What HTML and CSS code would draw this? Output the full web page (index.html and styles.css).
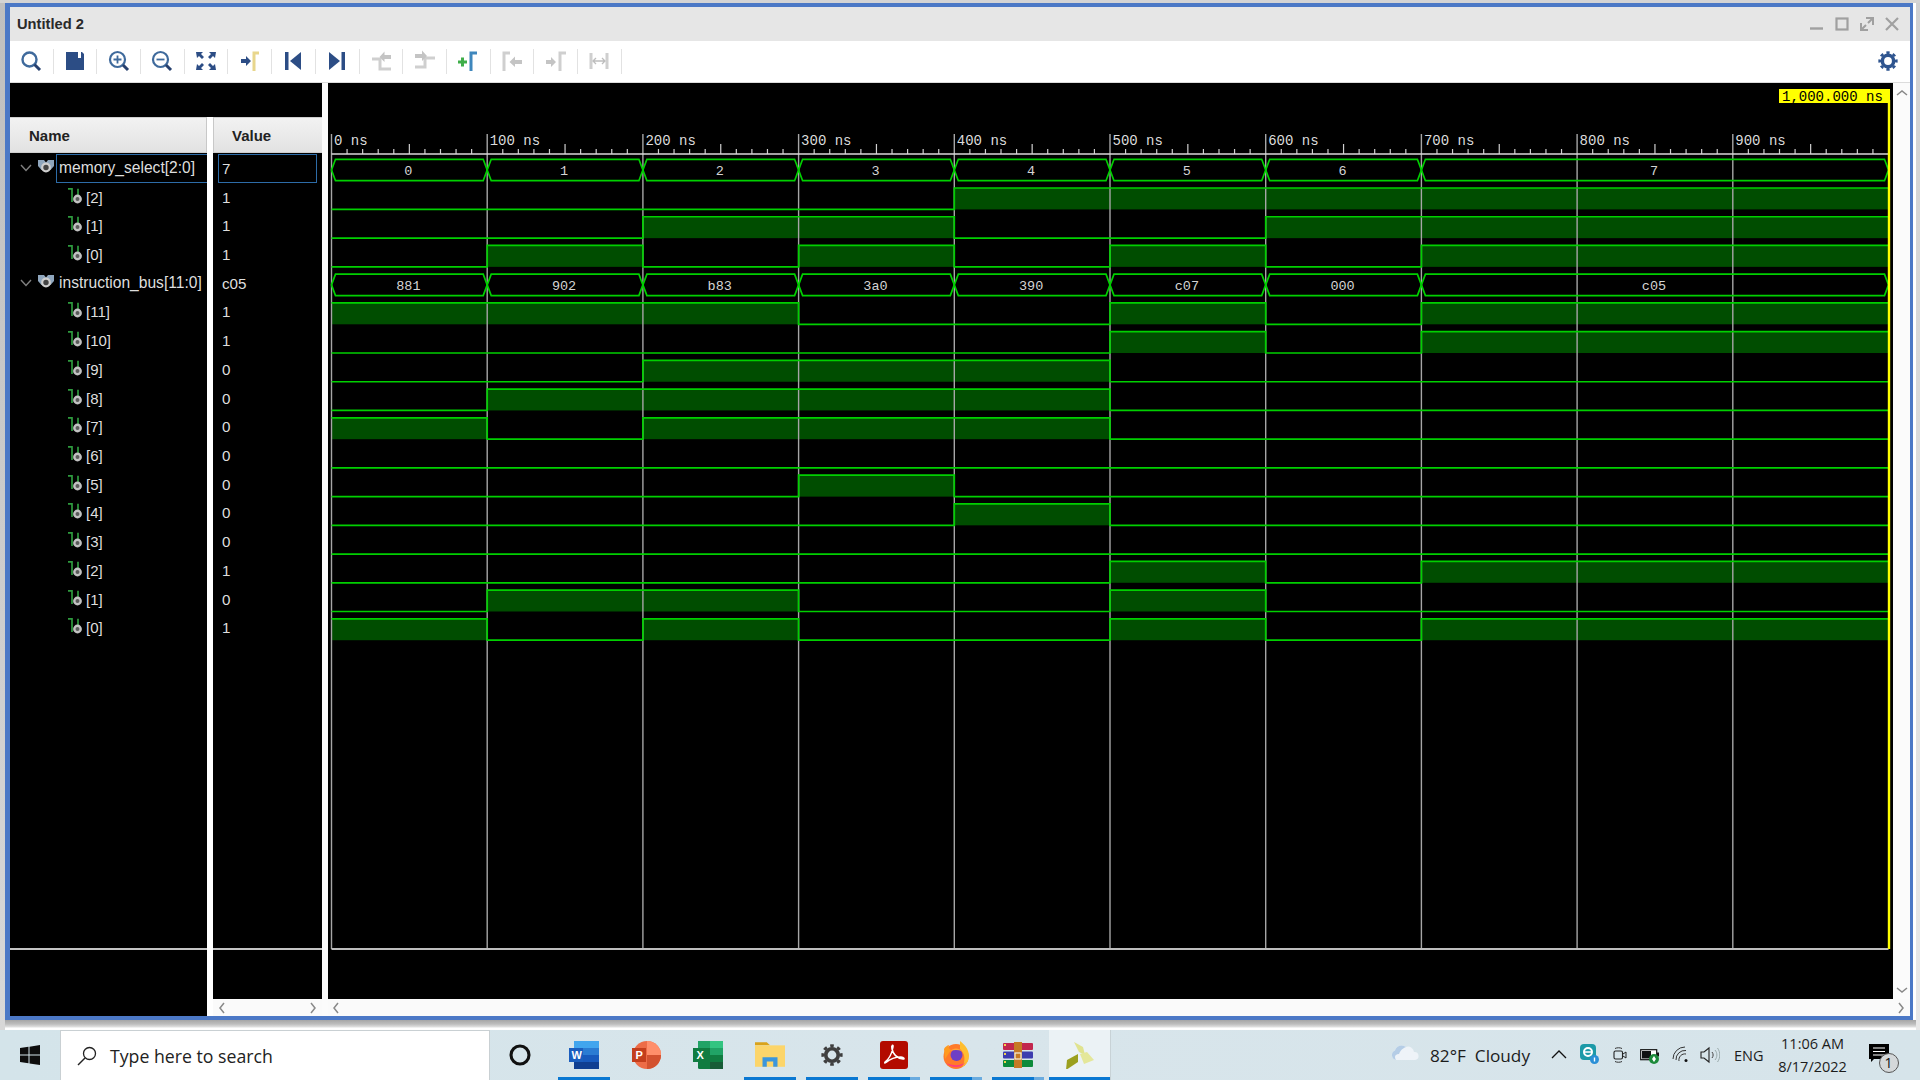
FILE: index.html
```html
<!DOCTYPE html>
<html lang="en">
<head>
<meta charset="utf-8">
<title>Untitled 2</title>
<link rel="stylesheet" href="styles.css">
</head>
<body>
<svg class="defs" width="0" height="0" aria-hidden="true">
  <defs>
    <symbol id="bit" viewBox="0 0 14 16">
      <path d="M0 .8H4V14" fill="none" stroke="#2e9a3e" stroke-width="1.700"/>
      <path d="M10 .8V7" fill="none" stroke="#2e9a3e" stroke-width="1.700"/>
      <circle cx="9.500" cy="11" r="3.200" fill="#5a5a5a" stroke="#c2c2c2" stroke-width="2.400"/>
    </symbol>
    <symbol id="group" viewBox="0 0 16 15">
      <path d="M0 1H6L8 3.500L10 1H16V7L12.500 11H3.500L0 7Z" fill="#8fa6bd"/>
      <circle cx="8" cy="8.500" r="3.800" fill="#444" stroke="#cfcfcf" stroke-width="2.200"/>
    </symbol>
    <symbol id="chev" viewBox="0 0 12 8">
      <path d="M1 1L6 6.500L11 1" fill="none" stroke="#808080" stroke-width="1.400"/>
    </symbol>
  </defs>
</svg>

<div class="window">
  <div class="frame">
    <header class="title">
      <span class="title-text">Untitled 2</span>
      <div class="winctl">
        <svg class="wc" viewBox="0 0 14 14"><path d="M0 11.500H13" stroke="#a0a0a0" stroke-width="2.400" fill="none"/></svg>
        <svg class="wc" viewBox="0 0 14 14"><rect x="1.500" y="1.500" width="11" height="11" stroke="#a0a0a0" stroke-width="2.200" fill="none"/></svg>
        <svg class="wc" viewBox="0 0 14 14"><path d="M6 1H13V8M13 1L8 6M8 13H1V6M1 13L6 8" stroke="#a0a0a0" stroke-width="2" fill="none"/></svg>
        <svg class="wc" viewBox="0 0 14 14"><path d="M1 1L13 13M13 1L1 13" stroke="#a0a0a0" stroke-width="2.200" fill="none"/></svg>
      </div>
    </header>

    <nav class="toolbar">
      <div class="tool"><svg viewBox="0 0 24 24"><circle cx="10.500" cy="10.500" r="7" fill="none" stroke="#3f6a9c" stroke-width="2.400"/><path d="M15.500 15.500L21 21" stroke="#27406e" stroke-width="3"/></svg></div>
      <div class="tool"><svg viewBox="0 0 24 24"><path d="M3 3H15V9H18V3H19L21 5V21H3Z" fill="#2c4d85"/></svg></div>
      <div class="tool"><svg viewBox="0 0 24 24"><circle cx="10.500" cy="10.500" r="7.500" fill="none" stroke="#3f6a9c" stroke-width="2.200"/><path d="M16 16L21 21" stroke="#27406e" stroke-width="3"/><path d="M6.500 10.500H14.500M10.500 6.500V14.500" stroke="#3f6a9c" stroke-width="1.800"/></svg></div>
      <div class="tool"><svg viewBox="0 0 24 24"><circle cx="10.500" cy="10.500" r="7.500" fill="none" stroke="#3f6a9c" stroke-width="2.200"/><path d="M16 16L21 21" stroke="#27406e" stroke-width="3"/><path d="M6.500 10.500H14.500" stroke="#3f6a9c" stroke-width="1.800"/></svg></div>
      <div class="tool"><svg viewBox="0 0 24 24" fill="#2c4d85"><path d="M2 3H9L7 5L10 8L8 10L5 7L3 9ZM22 3H15L17 5L14 8L16 10L19 7L21 9ZM2 21H9L7 19L10 16L8 14L5 17L3 15ZM22 21H15L17 19L14 16L16 14L19 17L21 15Z"/></svg></div>
      <div class="tool"><svg viewBox="0 0 24 24"><path d="M3 10H8V7L13 12L8 17V14H3Z" fill="#2c4d85"/><path d="M16 22V4H21" fill="none" stroke="#e8d68c" stroke-width="3"/></svg></div>
      <div class="tool"><svg viewBox="0 0 24 24" fill="#2c4d85"><rect x="4" y="3" width="3.500" height="18"/><path d="M20 3V21L9 12Z"/></svg></div>
      <div class="tool"><svg viewBox="0 0 24 24" fill="#2c4d85"><rect x="16.500" y="3" width="3.500" height="18"/><path d="M4 3V21L15 12Z"/></svg></div>
      <div class="tool"><svg viewBox="0 0 24 24"><path d="M3 10H11V20H22" fill="none" stroke="#cfcfcf" stroke-width="3"/><path d="M22 6H15.500V2.500L10.500 8L15.500 13V10H22Z" fill="#c4c4c4"/></svg></div>
      <div class="tool"><svg viewBox="0 0 24 24"><path d="M2 18H12V9H22" fill="none" stroke="#cfcfcf" stroke-width="3"/><path d="M2 6H9V2.500L14 8L9 13V10H2Z" fill="#c4c4c4" transform="translate(0 -1)"/></svg></div>
      <div class="tool"><svg viewBox="0 0 24 24"><path d="M2 13H11M6.500 8.500V17.500" stroke="#3fae49" stroke-width="3" fill="none"/><path d="M15 22V4H21" fill="none" stroke="#3f87bd" stroke-width="3"/></svg></div>
      <div class="tool"><svg viewBox="0 0 24 24"><path d="M4 22V4H10" fill="none" stroke="#cfcfcf" stroke-width="3"/><path d="M22 11H15V7.500L9.500 13L15 18V15H22Z" fill="#c4c4c4"/></svg></div>
      <div class="tool"><svg viewBox="0 0 24 24"><path d="M2 11H7V8L12 13L7 18V15H2Z" fill="#c4c4c4"/><path d="M16 22V4H22" fill="none" stroke="#cfcfcf" stroke-width="3"/></svg></div>
      <div class="tool"><svg viewBox="0 0 24 24"><path d="M4 4V20M20 4V20" stroke="#cfcfcf" stroke-width="3" fill="none"/><path d="M6 12H18M9 9L6 12L9 15M15 9L18 12L15 15" stroke="#bdbdbd" stroke-width="1.300" fill="none"/></svg></div>
      <div class="tool-gear"><svg viewBox="0 0 24 24"><circle cx="12" cy="12" r="6.800" fill="none" stroke="#2f558f" stroke-width="4.200"/><circle cx="12" cy="12" r="10" fill="none" stroke="#2f558f" stroke-width="3.200" pathLength="16" stroke-dasharray="1 1" stroke-dashoffset=".5"/></svg></div>
    </nav>

    <main class="body">
      <section class="panel">
        <div class="panel-top"></div>
        <div class="panel-cols">
          <div class="col col-name">
            <div class="hdr hdr-name">Name</div>
            <div class="rows">
              <div class="row row-group"><svg class="chev"><use href="#chev"/></svg><svg class="gicon"><use href="#group"/></svg><span class="label label-sel">memory_select[2:0]</span></div>
              <div class="row row-bit"><svg class="bicon"><use href="#bit"/></svg><span class="blabel">[2]</span></div>
              <div class="row row-bit"><svg class="bicon"><use href="#bit"/></svg><span class="blabel">[1]</span></div>
              <div class="row row-bit"><svg class="bicon"><use href="#bit"/></svg><span class="blabel">[0]</span></div>
              <div class="row row-group"><svg class="chev"><use href="#chev"/></svg><svg class="gicon"><use href="#group"/></svg><span class="label">instruction_bus[11:0]</span></div>
              <div class="row row-bit"><svg class="bicon"><use href="#bit"/></svg><span class="blabel">[11]</span></div>
              <div class="row row-bit"><svg class="bicon"><use href="#bit"/></svg><span class="blabel">[10]</span></div>
              <div class="row row-bit"><svg class="bicon"><use href="#bit"/></svg><span class="blabel">[9]</span></div>
              <div class="row row-bit"><svg class="bicon"><use href="#bit"/></svg><span class="blabel">[8]</span></div>
              <div class="row row-bit"><svg class="bicon"><use href="#bit"/></svg><span class="blabel">[7]</span></div>
              <div class="row row-bit"><svg class="bicon"><use href="#bit"/></svg><span class="blabel">[6]</span></div>
              <div class="row row-bit"><svg class="bicon"><use href="#bit"/></svg><span class="blabel">[5]</span></div>
              <div class="row row-bit"><svg class="bicon"><use href="#bit"/></svg><span class="blabel">[4]</span></div>
              <div class="row row-bit"><svg class="bicon"><use href="#bit"/></svg><span class="blabel">[3]</span></div>
              <div class="row row-bit"><svg class="bicon"><use href="#bit"/></svg><span class="blabel">[2]</span></div>
              <div class="row row-bit"><svg class="bicon"><use href="#bit"/></svg><span class="blabel">[1]</span></div>
              <div class="row row-bit"><svg class="bicon"><use href="#bit"/></svg><span class="blabel">[0]</span></div>
            </div>
            <div class="foot foot-name"></div>
          </div>
          <div class="col col-value">
            <div class="hdr hdr-value">Value</div>
            <div class="rows">
              <div class="val val-sel">7</div>
              <div class="val">1</div>
              <div class="val">1</div>
              <div class="val">1</div>
              <div class="val">c05</div>
              <div class="val">1</div>
              <div class="val">1</div>
              <div class="val">0</div>
              <div class="val">0</div>
              <div class="val">0</div>
              <div class="val">0</div>
              <div class="val">0</div>
              <div class="val">0</div>
              <div class="val">0</div>
              <div class="val">1</div>
              <div class="val">0</div>
              <div class="val">1</div>
            </div>
            <div class="foot foot-value"></div>
            <div class="hscroll hscroll-value">
              <svg class="arr" viewBox="0 0 8 12"><path d="M6 1L2 6L6 11" fill="none" stroke="#888" stroke-width="1.500"/></svg>
              <svg class="arr" viewBox="0 0 8 12"><path d="M2 1L6 6L2 11" fill="none" stroke="#888" stroke-width="1.500"/></svg>
            </div>
          </div>
        </div>
      </section>

      <section class="wave">
        <svg id="waves" class="wave-svg" viewBox="328 83 1565 916"></svg>
        <div class="hscroll hscroll-wave">
          <svg class="arr" viewBox="0 0 8 12"><path d="M6 1L2 6L6 11" fill="none" stroke="#888" stroke-width="1.500"/></svg>
          <svg class="arr" viewBox="0 0 8 12"><path d="M2 1L6 6L2 11" fill="none" stroke="#888" stroke-width="1.500"/></svg>
        </div>
      </section>

      <aside class="vscroll">
        <svg class="arrv" viewBox="0 0 12 8"><path d="M1 6L6 2L11 6" fill="none" stroke="#888" stroke-width="1.500"/></svg>
        <svg class="arrv" viewBox="0 0 12 8"><path d="M1 2L6 6L11 2" fill="none" stroke="#888" stroke-width="1.500"/></svg>
      </aside>
    </main>
  </div>
</div>

<footer class="taskbar">
  <div class="start"><svg viewBox="0 0 20 20"><path d="M0 3L8.500 1.800V9.500H0ZM9.500 1.700L20 0V9.500H9.500ZM0 10.500H8.500V18.200L0 17ZM9.500 10.500H20V20L9.500 18.400Z" fill="#0d0d0d"/></svg></div>
  <div class="search">
    <svg class="search-ico" viewBox="0 0 20 20"><circle cx="12.500" cy="7.500" r="6" fill="none" stroke="#222" stroke-width="1.300"/><path d="M8 12L1 19" stroke="#222" stroke-width="1.500"/></svg>
    <span class="search-text">Type here to search</span>
  </div>
  <div class="cortana"><svg viewBox="0 0 20 20"><circle cx="10" cy="10" r="7.500" fill="none" stroke="#111" stroke-width="2.600"/></svg></div>

  <div class="app app-on"><svg viewBox="0 0 30 28"><rect x="5" y="0" width="25" height="7" fill="#41a5ee"/><rect x="5" y="7" width="25" height="7" fill="#2b7cd3"/><rect x="5" y="14" width="25" height="7" fill="#185abd"/><rect x="5" y="21" width="25" height="7" fill="#103f91"/><rect x="0" y="7" width="14" height="14" fill="#1b5ebe"/><text class="app-letter" x="2.500" y="18">W</text></svg></div>
  <div class="app"><svg viewBox="0 0 30 28"><circle cx="16" cy="14" r="14" fill="#ed6c47"/><path d="M16 0A14 14 0 0 1 30 14H16Z" fill="#ff8f6b"/><path d="M16 14H30A14 14 0 0 1 16 28Z" fill="#d35230"/><rect x="1" y="7" width="14" height="14" fill="#c43e1c"/><text class="app-letter" x="4.500" y="18">P</text></svg></div>
  <div class="app"><svg viewBox="0 0 30 28"><rect x="5" y="0" width="25" height="28" rx="1.500" fill="#107c41"/><rect x="17" y="0" width="13" height="7" fill="#33c481"/><rect x="5" y="0" width="12" height="7" fill="#21a366"/><rect x="17" y="7" width="13" height="7" fill="#21a366"/><rect x="17" y="21" width="13" height="7" fill="#185c37"/><rect x="0" y="7" width="14" height="14" fill="#107c41"/><text class="app-letter" x="3.500" y="18">X</text></svg></div>
  <div class="app app-on"><svg viewBox="0 0 28 24"><path d="M0 0H11L14 3H0Z" fill="#d9a21b"/><rect x="0" y="3" width="28" height="20" fill="#fcd56a"/><path d="M7 23V14H21V23H17V18H11V23Z" fill="#3b96dc"/></svg></div>
  <div class="app app-on app-gear"><svg viewBox="0 0 24 24"><circle cx="12" cy="12" r="6.800" fill="none" stroke="#3f3f3f" stroke-width="4"/><circle cx="12" cy="12" r="10" fill="none" stroke="#3f3f3f" stroke-width="3.200" pathLength="16" stroke-dasharray="1 1" stroke-dashoffset=".5"/></svg></div>
  <div class="app app-on app-run"><svg viewBox="0 0 28 28"><rect width="28" height="28" rx="3" fill="#b30b00"/><path d="M5 21C9 18 12 12 13 6C13.500 3 11 4 12 8C13 13 17 17 23 18C25 18.500 24 16 21 16C16 16 10 18 6 21.500C4.500 22.500 4.500 22 5 21Z" fill="none" stroke="#fff" stroke-width="1.500"/></svg></div>
  <div class="app app-on app-run"><svg viewBox="0 0 28 28"><circle cx="14" cy="15.500" r="12.500" fill="#ff7a2a"/><path d="M18 0C22 3 27 8 27 15A13 13 0 0 1 20 26C24 20 23 12 18 8Z" fill="#ffbd2e"/><path d="M2 8C3 6 5 4.500 7 4C6 6 7 8 9 9L3 18Z" fill="#ff9a1f"/><circle cx="14.500" cy="14" r="6" fill="#6e3fc4"/><path d="M8 10C11 6.500 17 6.500 20 10C16 8.500 12 8.500 8 10Z" fill="#ffa436"/><path d="M4 22C9 27 19 28 24 21C20 25 10 25 4 22Z" fill="#ff3d7f"/></svg></div>
  <div class="app app-on app-run"><svg viewBox="0 0 30 26"><rect y="1" width="30" height="7" rx="1" fill="#c2274e"/><rect y="9.500" width="30" height="7" rx="1" fill="#3d3cae"/><rect y="18" width="30" height="7" rx="1" fill="#0c8a3a"/><rect x="11" y="0" width="8" height="26" fill="#c67a25"/><rect x="12" y="11" width="6" height="6" fill="none" stroke="#f4f0e0" stroke-width="1.200"/><path d="M1 3H3M1 12H3M1 20H3" stroke="#f2d24d" stroke-width="2"/></svg></div>
  <div class="app app-on app-active"><svg viewBox="0 0 28 28"><path d="M8 1L17 6L19 14L13 11Z" fill="#e0e38f"/><path d="M14 13L21 11L28 19L18 23Z" fill="#e4e79a"/><path d="M12 13L1 19L0 29L12 21Z" fill="#9ba01e"/></svg></div>

  <div class="tray">
    <svg class="t-cloud" viewBox="0 0 28 16"><path d="M5 16A5 5 0 0 1 4 6.500A7 7 0 0 1 15 3A6 6 0 0 1 23 8A4 4 0 0 1 24 16Z" fill="#eef3f8"/><path d="M5 16A5 5 0 0 1 4 6.500A7 7 0 0 1 15 3C10 5 9 8 8 10C4 10 3 13 5 16Z" fill="#b5cde6"/></svg>
    <span class="t-weather">82°F&nbsp; Cloudy</span>
    <svg class="t-caret" viewBox="0 0 16 9"><path d="M1 8L8 1L15 8" fill="none" stroke="#111" stroke-width="1.300"/></svg>
    <svg class="t-eset" viewBox="0 0 20 20"><rect x="1" y="0" width="16" height="16" rx="4" fill="#1c9aa8"/><circle cx="9" cy="8" r="4" fill="none" stroke="#fff" stroke-width="2"/><path d="M5 8H13" stroke="#fff" stroke-width="1.500"/><circle cx="15.500" cy="15.500" r="4.500" fill="#2a8fd6"/><path d="M15.500 13.500V17.500" stroke="#fff" stroke-width="1.400"/></svg>
    <svg class="t-meet" viewBox="0 0 14 18"><rect x="1" y="5" width="8.500" height="8" rx="1.500" fill="none" stroke="#222" stroke-width="1.100"/><path d="M10 8L13 6V12L10 10" fill="none" stroke="#222" stroke-width="1"/><path d="M2 2.500C4 1.500 7 1.500 9 2.500M2 15.500C4 16.500 7 16.500 9 15.500" fill="none" stroke="#333" stroke-width="1"/></svg>
    <svg class="t-batt" viewBox="0 0 20 18"><rect x=".7" y="3.700" width="16" height="10" fill="#fff" stroke="#111" stroke-width="1.200"/><rect x="2" y="5" width="9" height="7.500" fill="#111"/><rect x="17" y="6.500" width="2" height="4" fill="#111"/><circle cx="14" cy="13" r="5" fill="#1c8a3a"/><path d="M14 10L16 13L14 16L12 13Z" fill="#fff"/></svg>
    <svg class="t-wifi" viewBox="0 0 18 18"><path d="M1 13A12 12 0 0 1 13 1M4 14A9 9 0 0 1 14 4.500M7 15A6 6 0 0 1 14 8" fill="none" stroke="#333" stroke-width="1"/><circle cx="14" cy="14.500" r="1.500" fill="#111"/></svg>
    <svg class="t-spk" viewBox="0 0 20 18"><path d="M1 6H4L9 2V16L4 12H1Z" fill="none" stroke="#222" stroke-width="1.100"/><path d="M12 6C13.500 8 13.500 10 12 12" fill="none" stroke="#444" stroke-width="1"/><path d="M15 4C17.500 7 17.500 11 15 14M17.500 2C20.500 6 20.500 12 17.500 16" fill="none" stroke="#9aa" stroke-width="1"/></svg>
    <span class="t-eng">ENG</span>
    <div class="t-clock"><span>11:06 AM</span><span>8/17/2022</span></div>
    <div class="t-notif">
      <svg class="t-bubble" viewBox="0 0 20 18"><path d="M0 0H20V15H5L2 18V15H0Z" fill="#000"/><path d="M4 4H16M4 7.500H16M4 11H16" stroke="#fff" stroke-width="1.200"/></svg>
      <span class="t-badge">1</span>
    </div>
  </div>
</footer>
<script src="script.js"></script>
</body>
</html>
```
FILE: styles.css
```css
* { box-sizing: border-box; }
html, body { margin: 0; padding: 0; }
body {
  width: 1920px;
  height: 1080px;
  overflow: hidden;
  background: #fff;
  display: flex;
  flex-direction: column;
  font-family: "Liberation Sans", Arial, sans-serif;
}
.defs { position: absolute; }

/* window */
.window {
  height: 1030px;
  padding: 3px 7px 7px 5px;
  background: linear-gradient(#d4d4d4, #d4d4d4) top/100% 3px no-repeat,
              linear-gradient(#bfbfbf, #d8d8d8) left/5px 100% no-repeat,
              linear-gradient(#d0d0d0, #e8e8e8) right/4px 100% no-repeat,
              linear-gradient(#a6a6a6 0, #bdbdbd 4px, #e0e0e0 7px, #fff 8px) bottom/100% 10px no-repeat;
  background-color: #fff;
}
.frame {
  height: 1017px;
  border-style: solid;
  border-color: #4b78c6;
  border-width: 4px 3px 4px 5px;
  display: flex;
  flex-direction: column;
  background: #fff;
}

.title {
  height: 34px;
  flex: none;
  background: #e6e6e6;
  display: flex;
  align-items: center;
  justify-content: space-between;
  padding: 0 11px 0 7px;
}
.title-text { font-size: 14.7px; font-weight: 700; color: #2a2a2a; margin-top: -1px; }
.winctl { display: flex; gap: 11px; }
.wc { width: 14px; height: 14px; display: block; }

.toolbar {
  height: 42px;
  flex: none;
  background: #fff;
  border-bottom: 1px solid #dcdcdc;
  display: flex;
  align-items: center;
  padding-bottom: 1px;
}
.tool {
  width: 43.7px;
  height: 25px;
  flex: none;
  border-right: 1.5px solid #e2e2e2;
  display: flex;
  align-items: center;
  justify-content: center;
}
.tool svg { width: 24px; height: 24px; display: block; }
.tool-gear { margin-left: auto; margin-right: 12px; }
.tool-gear svg { width: 20px; height: 20px; display: block; }

.body { flex: 1; display: flex; min-height: 0; background: #fbfbfb; }

/* tree */
.panel { width: 312px; flex: none; display: flex; flex-direction: column; }
.panel-top { height: 34px; flex: none; background: #000; }
.panel-cols { flex: 1; display: flex; gap: 6px; background: #fff; min-height: 0; }
.col { display: flex; flex-direction: column; background: #000; }
.col-name { width: 197px; flex: none; }
.col-value { flex: 1; }

.hdr {
  height: 36px;
  flex: none;
  background: linear-gradient(#f2f2f2, #e2e2e2);
  border-top: 1.5px solid #cfcfcf;
  border-bottom: 1.5px solid #cfcfcf;
  font-size: 15px;
  font-weight: 700;
  color: #222;
  display: flex;
  align-items: center;
}
.hdr-name { padding-left: 19px; border-right: 1px solid #c8c8c8; }
.hdr-value { padding-left: 18px; border-left: 1px solid #c8c8c8; }

.rows {
  height: 797px;
  flex: none;
  padding-top: 1px;
  border-bottom: 2px solid #c4c4c4;
  color: #dedede;
  font-size: 15.6px;
}
.row { height: 28.72px; display: flex; align-items: center; }
.row-group { padding-left: 10px; }
.row-bit { padding-left: 58px; }
.chev { width: 12px; height: 8px; flex: none; }
.gicon { width: 16px; height: 15px; flex: none; margin-left: 6px; margin-top: -4px; }
.bicon { width: 14px; height: 16px; flex: none; margin-top: -3px; }
.label {
  flex: 1;
  height: 100%;
  margin-left: 2px;
  padding-left: 2px;
  border: 1.5px solid transparent;
  border-right: 0;
  display: flex;
  align-items: center;
  white-space: nowrap;
}
.label-sel { border-color: #2d6ca8; }
.blabel { margin-left: 4px; font-size: 15px; }
.val {
  height: 28.72px;
  margin: 0 5px;
  padding-left: 3px;
  border: 1.5px solid transparent;
  display: flex;
  align-items: center;
  font-size: 15.2px;
}
.val-sel { border-color: #2d6ca8; }
.foot { background: #000; }
.foot-name { flex: 1; }
.foot-value { height: 49px; flex: none; }

.hscroll {
  height: 17px;
  flex: 1;
  background: #fafafa;
  display: flex;
  align-items: center;
  justify-content: space-between;
}
.hscroll-value { padding: 0 5px; }
.hscroll-wave { flex: none; padding: 0 5px 0 4px; margin-right: -17px; position: relative; }
.arr { width: 8px; height: 12px; display: block; }

/* waveform canvas */
.wave { flex: 1; display: flex; flex-direction: column; margin-left: 6px; min-width: 0; }
.wave-svg { display: block; width: 1565px; height: 916px; background: #000; flex: none; }
.wave-svg text { font-family: "Liberation Mono", "DejaVu Sans Mono", monospace; }
.grid { stroke: #a6a6a6; stroke-width: 1.4; fill: none; }
.axis { stroke: #d8d8d8; stroke-width: 1.6; fill: none; }
.tick { stroke: #cfcfcf; stroke-width: 1.2; fill: none; }
.base { stroke: #bdbdbd; stroke-width: 1.8; fill: none; }
.sig { stroke: #00d000; stroke-width: 1.7; fill: none; }
.hi { fill: #004d00; }
.rul { fill: #dcdcdc; font-size: 14px; }
.busv { fill: #d4d4d4; font-size: 13.5px; text-anchor: middle; }
.cur { stroke: #ffff00; stroke-width: 2.4; fill: none; }
.cur-box { fill: #ffff00; }
.cur-t { fill: #000; font-size: 14px; }

.vscroll {
  width: 17px;
  flex: none;
  height: 916px;
  background: #fbfbfb;
  display: flex;
  flex-direction: column;
  align-items: center;
  justify-content: space-between;
  padding: 6px 0 5px;
}
.arrv { width: 12px; height: 8px; display: block; }

/* taskbar */
.taskbar {
  height: 50px;
  flex: none;
  background: linear-gradient(90deg, #d4e4ea, #d8e5eb 50%, #d6e4ea);
  display: flex;
  align-items: center;
}
.start { width: 60px; height: 100%; display: flex; align-items: center; justify-content: center; flex: none; }
.start svg { width: 20px; height: 20px; }
.search {
  width: 430px;
  height: 100%;
  flex: none;
  background: #fff;
  border: 1px solid #c9d0d3;
  border-bottom: 0;
  display: flex;
  align-items: center;
  padding-left: 16px;
}
.search-ico { width: 20px; height: 20px; flex: none; }
.search-text { margin-left: 13px; font-family: "Open Sans", "Noto Sans", sans-serif; font-size: 17.7px; color: #222; }
.cortana { width: 59px; margin-right: 4px; height: 100%; flex: none; display: flex; align-items: center; justify-content: center; }
.cortana svg { width: 24px; height: 24px; }
.app {
  width: 62px;
  height: 100%;
  flex: none;
  display: flex;
  align-items: center;
  justify-content: center;
  padding-bottom: 1px;
  position: relative;
}
.app svg { width: 30px; height: 28px; display: block; }
.app-gear svg { width: 22px; height: 22px; }
.app-letter { font-family: "Liberation Sans", sans-serif; font-weight: 700; font-size: 11px; fill: #fff; }
.app-on::after {
  content: "";
  position: absolute;
  left: 5px;
  right: 5px;
  bottom: 0;
  height: 3px;
  background: #0a78d2;
}
.app-run::after { background: linear-gradient(90deg, #0a78d2 80%, #6aabdf 80%); }
.app-active { background: #ebf2f5; border-right: 1px solid #c8d2d6; }
.app-active::after { left: 0; right: 0; }

.tray { display: flex; align-items: center; margin-left: 280px; height: 100%; flex: none; }
.t-cloud { width: 28px; height: 16px; margin-top: -6px; }
.t-weather { margin-left: 11px; font-family: "Open Sans", "Noto Sans", sans-serif; font-size: 17.2px; color: #1c1c1c; white-space: nowrap; }
.t-caret { width: 16px; height: 9px; margin-left: 21px; margin-top: -2px; }
.t-eset { width: 20px; height: 20px; margin-left: 12px; margin-top: -2px; }
.t-meet { width: 14px; height: 18px; margin-left: 14px; }
.t-batt { width: 20px; height: 18px; margin-left: 13px; }
.t-wifi { width: 18px; height: 18px; margin-left: 12px; }
.t-spk { width: 20px; height: 18px; margin-left: 10px; }
.t-eng { margin-left: 14px; font-family: "Open Sans", "Noto Sans", sans-serif; font-size: 14.5px; color: #1c1c1c; }
.t-clock {
  width: 82px;
  margin-left: 8px;
  display: flex;
  flex-direction: column;
  align-items: center;
  gap: 3px;
  font-family: "Open Sans", "Noto Sans", sans-serif;
  font-size: 14.5px;
  line-height: 20px;
  color: #1c1c1c;
}
.t-notif { position: relative; width: 20px; height: 18px; margin-left: 15px; margin-top: -5px; }
.t-bubble { width: 20px; height: 18px; display: block; }
.t-badge {
  position: absolute;
  left: 10px;
  top: 9px;
  width: 20px;
  height: 20px;
  border-radius: 50%;
  background: #d4d8da;
  border: 1px solid #555;
  font-family: "Open Sans", "Noto Sans", sans-serif;
  font-size: 14px;
  line-height: 18px;
  text-align: center;
  color: #111;
}
```
FILE: script.js
```js
const NS = "http://www.w3.org/2000/svg";
const svg = document.getElementById("waves");
const X = t => 331.5 + 1.557 * t;
const rowBottom = i => 180.7 + 28.72 * i;
const RH = 21.4;

function el(name, attrs, text) {
  const e = document.createElementNS(NS, name);
  for (const k in attrs) e.setAttribute(k, attrs[k]);
  if (text !== undefined) e.textContent = text;
  svg.appendChild(e);
  return e;
}

const edges = [0, 100, 200, 300, 400, 500, 600, 700, 1000];
const mem = [0, 1, 2, 3, 4, 5, 6, 7];
const bus = [0x881, 0x902, 0xb83, 0x3a0, 0x390, 0xc07, 0x000, 0xc05];

const rows = [
  { bus: mem, hex: v => v.toString(16) },
  { bit: [mem, 2] }, { bit: [mem, 1] }, { bit: [mem, 0] },
  { bus: bus, hex: v => v.toString(16).padStart(3, "0") }
];
for (let b = 11; b >= 0; b--) rows.push({ bit: [bus, b] });

/* high-level fills first, so the grid lies over them */
rows.forEach((r, i) => {
  if (!r.bit) return;
  const [src, b] = r.bit;
  src.forEach((v, s) => {
    if ((v >> b) & 1) {
      el("rect", {
        class: "hi", x: X(edges[s]), y: rowBottom(i) - RH,
        width: X(edges[s + 1]) - X(edges[s]), height: RH
      });
    }
  });
});

/* ruler and grid */
for (let k = 0; k <= 9; k++) {
  const x = X(k * 100);
  el("line", { class: "grid", x1: x, x2: x, y1: 134, y2: 949 });
  el("text", { class: "rul", x: x + 2.5, y: 145 }, k * 100 + " ns");
  for (let m = 1; m < 10; m++) {
    const tx = X(k * 100 + m * 10);
    el("line", { class: "tick", x1: tx, x2: tx, y1: m === 5 ? 144 : 149, y2: 154 });
  }
}
el("line", { class: "axis", x1: X(0), x2: X(1000), y1: 154, y2: 154 });
el("line", { class: "base", x1: X(0), x2: X(1000), y1: 949, y2: 949 });

/* signals */
rows.forEach((r, i) => {
  const bot = rowBottom(i);
  const top = bot - RH;
  if (r.bus) {
    const mid = (top + bot) / 2;
    r.bus.forEach((v, s) => {
      const a = X(edges[s]);
      const b = X(edges[s + 1]);
      el("path", {
        class: "sig",
        d: `M${a} ${mid}L${a + 4} ${top}H${b - 4}L${b} ${mid}L${b - 4} ${bot}H${a + 4}Z`
      });
      el("text", { class: "busv", x: (a + b) / 2 - 1, y: mid + 5 }, r.hex(v));
    });
  } else {
    const [src, bitNo] = r.bit;
    let d = "";
    let prev = null;
    src.forEach((v, s) => {
      const y = ((v >> bitNo) & 1) ? top : bot;
      const a = X(edges[s]);
      const b = X(edges[s + 1]);
      d += prev === null ? `M${a} ${y}` : (prev !== y ? `V${y}` : "");
      d += `H${b}`;
      prev = y;
    });
    el("path", { class: "sig", d });
  }
});

/* cursor */
el("line", { class: "cur", x1: 1889, x2: 1889, y1: 100, y2: 949 });
el("rect", { class: "cur-box", x: 1779, y: 89, width: 111, height: 14 });
el("text", { class: "cur-t", x: 1782, y: 101 }, "1,000.000 ns");
```
